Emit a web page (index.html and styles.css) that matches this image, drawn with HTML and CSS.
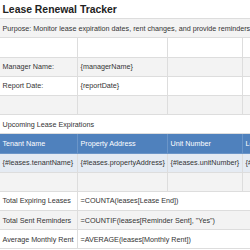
FILE: index.html
```html
<!DOCTYPE html>
<html>
<head>
<meta charset="utf-8">
<link rel="stylesheet" href="styles.css">
</head>
<body>
<table class="sheet">
  <colgroup>
    <col class="c1"><col class="c2"><col class="c3"><col class="c4">
  </colgroup>
  <tr class="title-row"><td colspan="4" class="title">Lease Renewal Tracker</td></tr>
  <tr class="alt"><td colspan="4">Purpose: Monitor lease expiration dates, rent changes, and provide reminders</td></tr>
  <tr><td></td><td></td><td></td><td></td></tr>
  <tr class="alt"><td>Manager Name:</td><td>{managerName}</td><td></td><td></td></tr>
  <tr><td>Report Date:</td><td>{reportDate}</td><td></td><td></td></tr>
  <tr class="alt"><td></td><td></td><td></td><td></td></tr>
  <tr><td colspan="4">Upcoming Lease Expirations</td></tr>
  <tr class="head"><td>Tenant Name</td><td>Property Address</td><td>Unit Number</td><td>Lease End</td></tr>
  <tr class="data"><td>{#leases.tenantName}</td><td>{#leases.propertyAddress}</td><td>{#leases.unitNumber}</td><td>{#leases.leaseEnd}</td></tr>
  <tr class="alt"><td></td><td></td><td></td><td></td></tr>
  <tr><td>Total Expiring Leases</td><td colspan="3">=COUNTA(leases[Lease End])</td></tr>
  <tr class="alt"><td>Total Sent Reminders</td><td colspan="3">=COUNTIF(leases[Reminder Sent], "Yes")</td></tr>
  <tr><td>Average Monthly Rent</td><td colspan="3">=AVERAGE(leases[Monthly Rent])</td></tr>
</table>
</body>
</html>
```
FILE: styles.css
```css
html, body {
  margin: 0;
  padding: 0;
  overflow: hidden;
  background: #ffffff;
}
.sheet {
  border-collapse: collapse;
  table-layout: fixed;
  width: 342px;
  font-family: "Liberation Sans", Arial, sans-serif;
  font-size: 7.2px;
  color: #333333;
  margin-left: -1px;
  margin-top: -1px;
}
.c1 { width: 78px; }
.c2 { width: 90px; }
.c3 { width: 75px; }
.c4 { width: 99px; }
.sheet tr {
  height: 19.2px;
}
.sheet td {
  border: 1px solid #dddddd;
  padding: 0 2.5px;
  white-space: nowrap;
  overflow: visible;
  vertical-align: middle;
}
.sheet tr.alt td {
  background: #f3f3f3;
}
.title {
  font-size: 10.4px;
  font-weight: bold;
  color: #222222;
}
.sheet tr.head td {
  background: #4f81bd;
  color: #ffffff;
  border-color: #6b95c8;
}
.sheet tr.data td {
  background: #e5ebf3;
}
```
